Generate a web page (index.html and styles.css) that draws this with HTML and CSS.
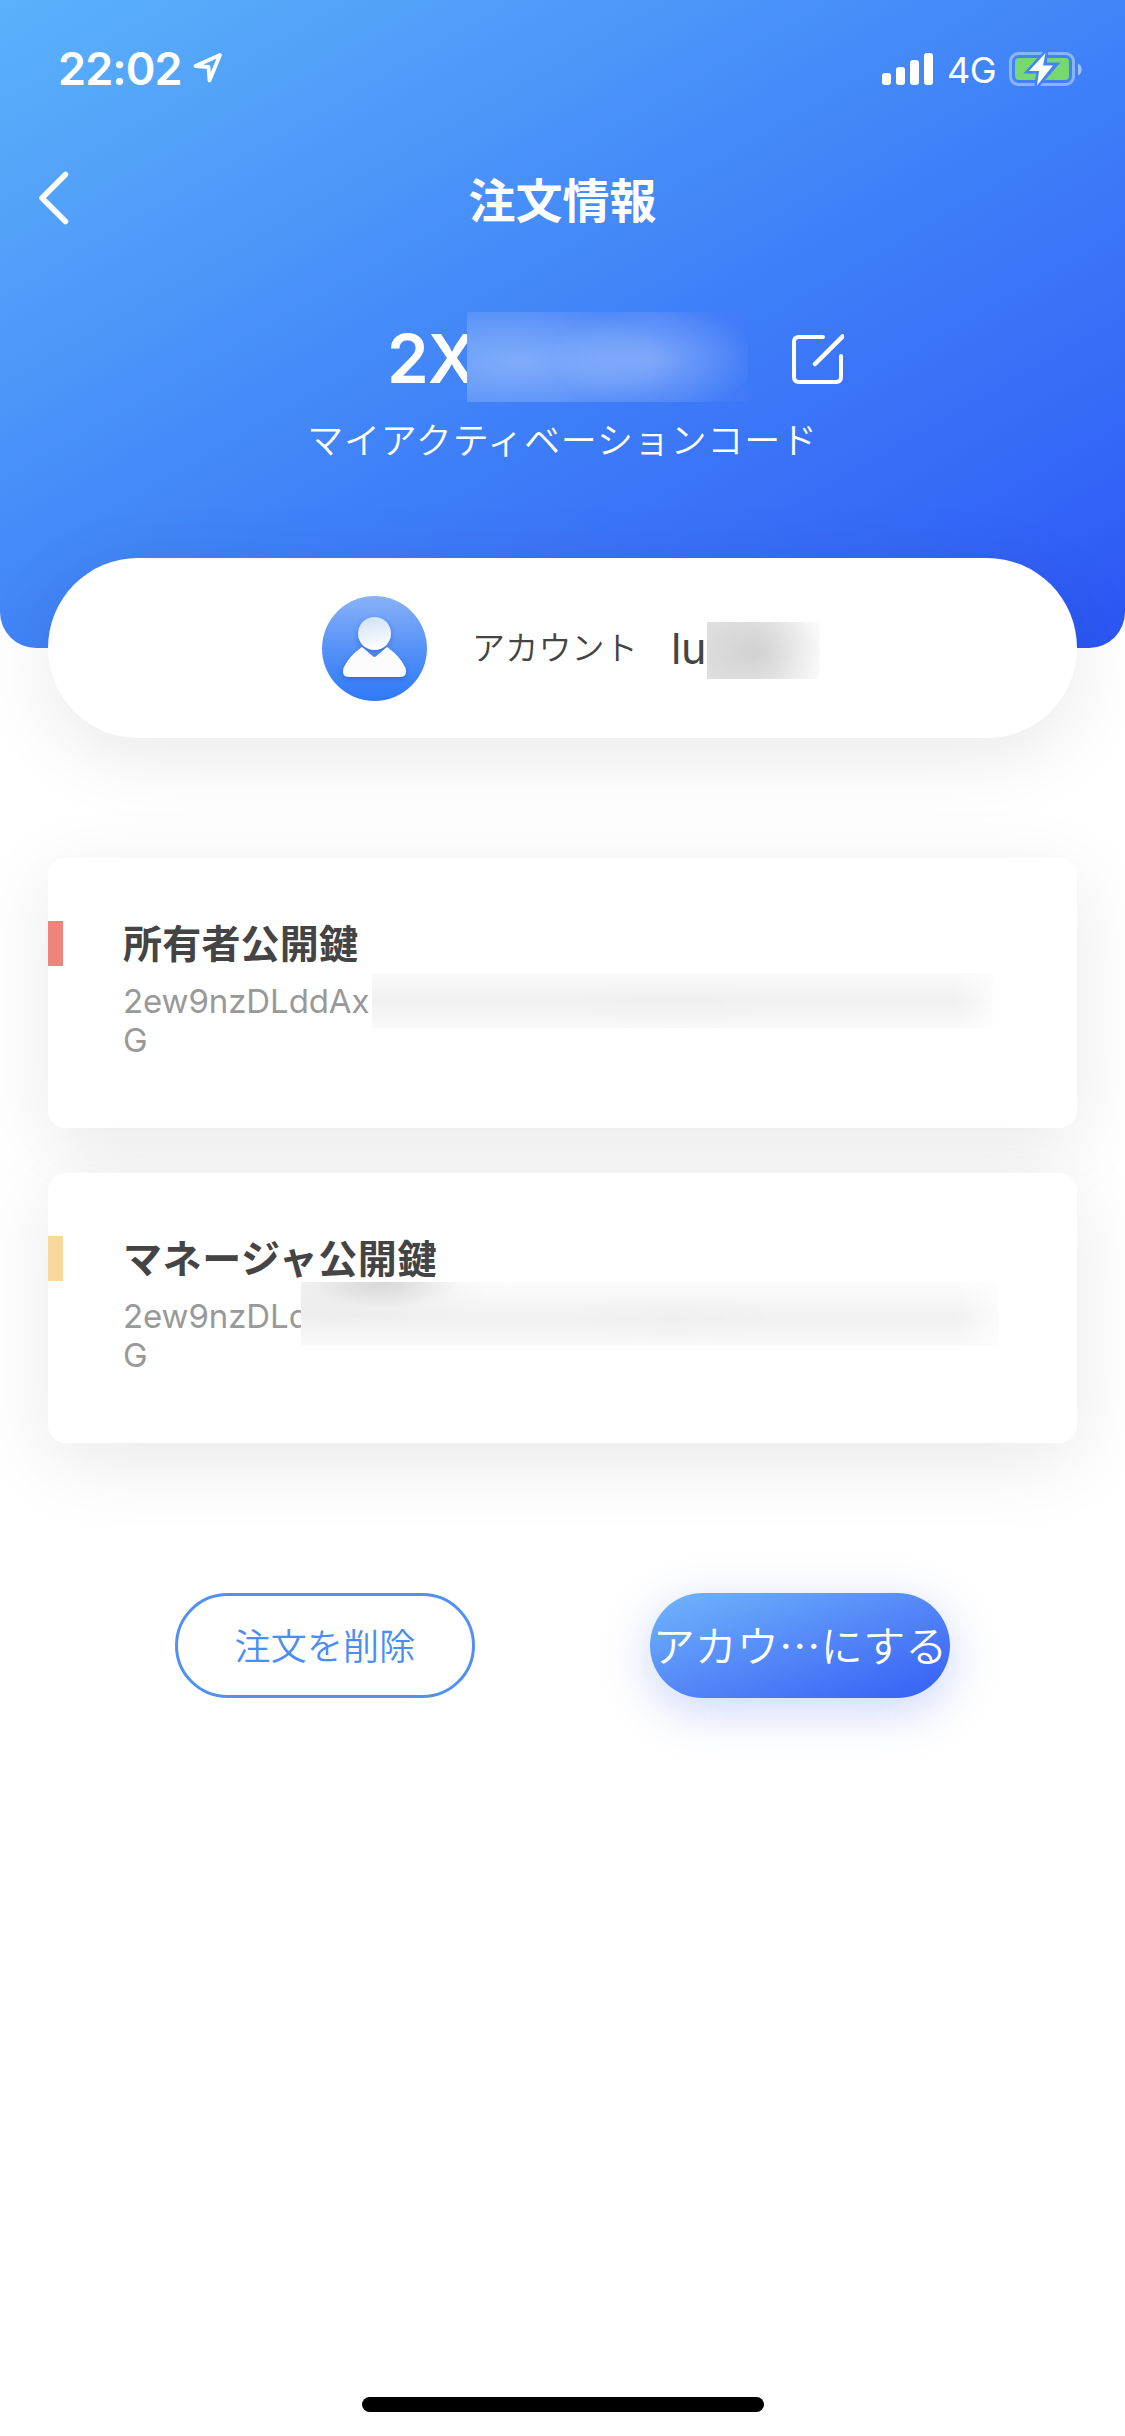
FILE: index.html
```html
<!DOCTYPE html>
<html lang="ja">
<head>
<meta charset="utf-8">
<title>注文情報</title>
<link rel="stylesheet" href="styles.css">
</head>
<body>
<div class="screen">
  <header class="hero">
    <div class="status">
      <span class="time">22:02</span>
      <svg class="location" width="34" height="36" viewBox="0 0 34 36"><path d="M29 6 4.500 17 17.500 18 18.500 31.500Z" fill="none" stroke="#fff" stroke-width="3.800" stroke-linejoin="round"/></svg>
      <svg class="signal" width="52" height="34" viewBox="0 0 52 34" fill="#fff"><rect x="0" y="21" width="9" height="12" rx="3"/><rect x="14" y="15" width="9" height="18" rx="3"/><rect x="28" y="8" width="9" height="25" rx="3"/><rect x="42" y="1" width="9" height="32" rx="3"/></svg>
      <span class="network">4G</span>
      <svg class="battery" width="74" height="36" viewBox="0 0 74 36">
        <rect x="1.500" y="2.500" width="63" height="31" rx="8" fill="none" stroke="#fff" stroke-opacity=".4" stroke-width="3"/>
        <path d="M69 12.500c5 2 5 10 0 12Z" fill="#fff" fill-opacity=".5"/>
        <rect x="6" y="7" width="54" height="22" rx="4" fill="#77d86f"/>
        <path d="M36.500 2 20 20h10L28 34.500 46 14H35Z" fill="#4384f8" stroke="#4384f8" stroke-width="5"/>
        <path d="M36.500 2 20 20h10L28 34.500 44 14.500H34Z" fill="#fff"/>
      </svg>
    </div>
    <nav class="nav">
      <svg class="back" width="32" height="56" viewBox="0 0 32 56"><path d="M28.500 4.500 5 28 28.500 51.500" fill="none" stroke="#fff" stroke-width="5.500" stroke-linecap="round" stroke-linejoin="round"/></svg>
      <h1 class="title">注文情報</h1>
    </nav>
    <div class="code">
      <span class="code-text">2X</span>
      <span class="mask mask-code"></span>
      <svg class="edit" width="54" height="54" viewBox="0 0 54 54" fill="none" stroke="#fff" stroke-width="4" stroke-linecap="round" stroke-linejoin="round"><path d="M33 5H9Q4 5 4 10V45Q4 50 9 50H46Q51 50 51 45V24"/><path d="M25 32 52.500 4.500" stroke-width="4.500"/></svg>
    </div>
    <p class="caption">マイアクティベーションコード</p>
  </header>

  <section class="account">
    <svg class="avatar" width="105" height="105" viewBox="0 0 105 105">
      <defs>
        <linearGradient id="disc" x1="0" y1="0" x2="0" y2="1"><stop offset="0" stop-color="#8ab1f8"/><stop offset=".5" stop-color="#5592f8"/><stop offset="1" stop-color="#2f78f8"/></linearGradient>
        <linearGradient id="head" x1=".4" y1="0" x2=".6" y2="1"><stop offset="0" stop-color="#d3e2f8"/><stop offset="1" stop-color="#fff"/></linearGradient>
        <filter id="soft" x="-20%" y="-20%" width="140%" height="150%"><feDropShadow dx="0" dy="2" stdDeviation="2.500" flood-color="#1c50b8" flood-opacity=".5"/></filter>
      </defs>
      <circle cx="52.500" cy="52.500" r="52.500" fill="url(#disc)"/>
      <g filter="url(#soft)">
        <path d="M40 51 50.500 60Q52.500 62 54.500 60L65 51Q78 60 83.500 72Q86 81 77.500 81H27.500Q19 81 21.500 72Q27 60 40 51Z" fill="#fcfcfc"/>
        <ellipse cx="52.500" cy="37.500" rx="16.500" ry="16.500" fill="url(#head)"/>
      </g>
    </svg>
    <span class="account-label">アカウント</span>
    <span class="account-name">lu</span>
    <span class="mask mask-name"></span>
  </section>

  <main class="keys">
    <article class="card owner">
      <h2 class="card-title">所有者公開鍵</h2>
      <div class="key"><span class="key-text">2ew9nzDLddAx</span><span class="mask mask-key"></span></div>
      <div class="key">G</div>
    </article>
    <article class="card manager">
      <h2 class="card-title">マネージャ公開鍵</h2>
      <div class="key"><span class="key-text">2ew9nzDLd</span><span class="mask mask-key"></span></div>
      <div class="key">G</div>
    </article>
  </main>

  <div class="actions">
    <button class="btn btn-outline">注文を削除</button>
    <button class="btn btn-primary">アカウ…にする</button>
  </div>
  <div class="home-indicator"></div>
</div>
</body>
</html>
```
FILE: styles.css
```css
* { box-sizing: border-box; }
body { margin: 0; background: #fff; }
h1, h2, p { margin: 0; }

.screen {
  width: 1125px;
  height: 2436px;
  display: flex;
  flex-direction: column;
  overflow: hidden;
  background: #fff;
  font-family: Inter, "Noto Sans CJK JP", sans-serif;
  color: #444;
}

/* header */
.hero {
  height: 648px;
  flex: none;
  border-radius: 0 0 36px 36px;
  background: linear-gradient(to bottom right, #5ab2fa 0%, #4f9bf9 25%, #3f80f8 54%, #3568f7 82%, #2a55f3 100%);
  color: #fff;
}
.status {
  height: 132px;
  padding: 6px 42px 0 58px;
  display: flex;
  align-items: center;
}
.time {
  width: 133px;
  font-size: 45px;
  font-weight: 600;
  line-height: 54px;
  letter-spacing: -.9px;
}
.location { margin-top: -4px; }
.signal { margin-left: auto; }
.network { width: 75px; padding-left: 13px; font-size: 36px; line-height: 44px; margin-top: 2px; letter-spacing: -.5px; }

.nav {
  height: 132px;
  display: grid;
  grid-template-columns: 150px 1fr 150px;
  align-items: center;
}
.back { margin-left: 37px; }
.title { padding-top: 5px; font-size: 47px; font-weight: 700; line-height: 60px; text-align: center; }

.code { height: 90px; margin-top: 48px; padding-left: 387px; display: flex; }
.code-text {
  width: 80px;
  font-size: 67px;
  font-weight: 600;
  line-height: 94px;
  letter-spacing: -1px;
  white-space: nowrap;
}
.edit { margin: 20px 0 0 42px; }
.caption {
  margin-top: 15px;
  text-align: center;
  font-size: 36px;
  font-weight: 350;
  line-height: 48px;
  letter-spacing: .8px;
}

/* obscured values */
.mask { flex: none; position: relative; }
.mask-code {
  width: 281px;
  height: 90px;
  background:
    radial-gradient(ellipse 105px 52px at 188px 47px, rgba(255,255,255,.24), rgba(255,255,255,.13) 50%, transparent),
    radial-gradient(ellipse 160px 56px at 55px 50px, rgba(255,255,255,.27), rgba(255,255,255,.15) 50%, transparent),
    linear-gradient(to right, rgba(255,255,255,.09), rgba(255,255,255,.08) 65%, rgba(255,255,255,.01)),
    linear-gradient(100deg, #4486f8, #3d78f8);
}
.mask-name {
  width: 113px;
  height: 57px;
  margin-top: 5px;
  background:
    radial-gradient(ellipse 72px 58px at 50px 29px, rgba(0,0,0,.11), transparent),
    linear-gradient(to right, rgba(0,0,0,.11), rgba(0,0,0,.07) 55%, rgba(0,0,0,.01)),
    #fff;
}

/* account */
.account {
  height: 180px;
  flex: none;
  margin: -90px 48px 0;
  padding-left: 274px;
  display: flex;
  align-items: center;
  border-radius: 90px;
  background: #fff;
  box-shadow: 0 18px 80px rgba(0,0,0,.09);
}
.account-label { width: 200px; margin-left: 45px; font-size: 33px; line-height: 48px; letter-spacing: .2px; font-weight: 350; }
.account-name { width: 35px; font-size: 43px; line-height: 54px; letter-spacing: -.5px; margin-left: -1px; margin-right: 1px; }

/* key cards */
.keys { margin: 120px 48px 0; display: flex; flex-direction: column; gap: 45px; }
.card {
  height: 270px;
  padding: 63px 0 0;
  border-radius: 18px;
  background: #fff;
  box-shadow: 0 18px 80px rgba(0,0,0,.09);
}
.card-title {
  padding-left: 60px;
  border-left: 15px solid #f0837c;
  font-size: 39px;
  font-weight: 700;
  line-height: 45px;
  letter-spacing: .2px;
  color: #444;
}
.manager .card-title { border-left-color: #f8d99b; letter-spacing: .6px; }
.key {
  height: 39px;
  padding-left: 75px;
  display: flex;
  font-size: 33px;
  line-height: 39px;
  letter-spacing: -.1px;
  color: #999;
}
.card-title + .key { margin-top: 16px; }
.key-text { width: 249px; height: 39px; white-space: nowrap; }
.mask-key {
  width: 621px;
  height: 55px;
  margin-top: -9px;
  background:
    radial-gradient(ellipse 110px 30px at 300px 30px, rgba(0,0,0,.01), transparent),
    linear-gradient(to right, transparent 94%, rgba(255,255,255,.7)),
    linear-gradient(#fafafa, #f1f1f1 50%, #f9f9f9);
}
.manager .key-text { width: 178px; }
.manager .mask-key {
  width: 697px;
  height: 64px;
  margin-top: -15px;
  background:
    radial-gradient(ellipse 75px 26px at 85px 0, rgba(0,0,0,.11), rgba(0,0,0,.05) 50%, transparent),
    radial-gradient(ellipse 150px 50px at 40px 0, rgba(0,0,0,.06), transparent),
    radial-gradient(ellipse 110px 30px at 372px 36px, rgba(0,0,0,.01), transparent),
    linear-gradient(to right, transparent 94%, rgba(255,255,255,.7)),
    linear-gradient(#fcfcfc, #f1f1f1 55%, #f9f9f9);
}

/* actions */
.actions { margin: 150px 175px 0; display: flex; justify-content: space-between; }
.btn {
  width: 300px;
  height: 105px;
  padding: 0 0 4px;
  border: 0;
  border-radius: 53px;
  font-family: "Noto Sans CJK JP", sans-serif;
  font-weight: 350;
  white-space: nowrap;
}
.btn-outline { border: 3px solid #4f90f2; background: #fff; color: #4a8df3; font-size: 36px; letter-spacing: .2px; }
.btn-primary {
  background: linear-gradient(to bottom right, #6fb6fb, #5488f8 50%, #345ff5);
  color: #fff;
  font-size: 42px;
  box-shadow: 0 12px 48px rgba(50,90,230,.25);
}

.home-indicator { width: 402px; height: 15px; margin: auto auto 24px; border-radius: 8px; background: #000; }
```
